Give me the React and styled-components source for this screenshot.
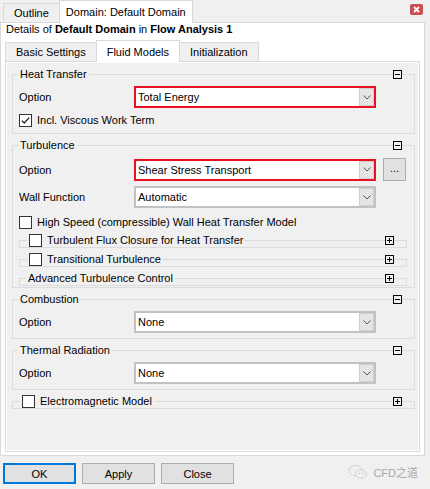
import React from 'react';
import styled, { createGlobalStyle } from 'styled-components';

const GlobalStyle = createGlobalStyle`
  html, body {
    margin: 0;
    padding: 0;
    background: #f0f0f0;
  }
  body {
    font-family: "Liberation Sans", Arial, "Noto Sans CJK SC", sans-serif;
    font-size: 11px;
    color: #000;
  }
`;

function Chevron() {
  return (
    <svg width="8" height="5" viewBox="0 0 8 5">
      <polyline points="0.5,0.5 4,4 7.5,0.5" fill="none" stroke="#555" strokeWidth="1" />
    </svg>
  );
}

function Check({ checked }) {
  return (
    <CheckBox>
      {checked && (
        <svg width="9" height="9" viewBox="0 0 9 9">
          <polyline points="0.8,4.6 3.2,7 8.2,1.6" fill="none" stroke="#222" strokeWidth="1.3" />
        </svg>
      )}
    </CheckBox>
  );
}

function Combo({ value, highlight }) {
  return (
    <Select $hl={highlight}>
      <SelectValue>{value}</SelectValue>
      <ArrowBox>
        <Chevron />
      </ArrowBox>
    </Select>
  );
}

function Group({ title, check, checked, inset, collapsed, children, bodyTop = 5, bodyBottom = 5, sub }) {
  return (
    <GroupWrap $sub={sub}>
      <Fieldset>
        <Legend $inset={inset}>
          <LegendInner>
            {check && <Check checked={checked} />}
            <span>{title}</span>
          </LegendInner>
        </Legend>
        {!collapsed && (
          <GroupBody $pt={bodyTop} $pb={bodyBottom}>
            {children}
          </GroupBody>
        )}
      </Fieldset>
      <Toggle $plus={collapsed} />
    </GroupWrap>
  );
}

function WeChatMark() {
  return (
    <svg width="20" height="16" viewBox="0 0 20 16">
      <ellipse cx="7.5" cy="6.5" rx="6.5" ry="5.2" fill="none" stroke="#c4c4c4" strokeWidth="1" strokeDasharray="2 1" />
      <ellipse cx="13" cy="10" rx="5.5" ry="4.3" fill="#f0f0f0" stroke="#c4c4c4" strokeWidth="1" strokeDasharray="2 1" />
      <circle cx="11" cy="9.5" r="0.8" fill="#c4c4c4" />
      <circle cx="15" cy="9.5" r="0.8" fill="#c4c4c4" />
    </svg>
  );
}

export default function App() {
  return (
    <>
      <GlobalStyle />
      <Window>
        <TopBar>
          <TopTab $pad={10}>Outline</TopTab>
          <TopTab $active $pad={6}>Domain: Default Domain</TopTab>
          <CloseBtn>
            <svg width="7" height="7" viewBox="0 0 7 7">
              <path d="M1 1 L6 6 M6 1 L1 6" stroke="#fff" strokeWidth="1.8" />
            </svg>
          </CloseBtn>
        </TopBar>

        <Main>
          <Details>
            Details of <b>Default Domain</b> in <b>Flow Analysis 1</b>
          </Details>

          <InnerTabs>
            <InnerTab>Basic Settings</InnerTab>
            <InnerTab $active>Fluid Models</InnerTab>
            <InnerTab>Initialization</InnerTab>
          </InnerTabs>

          <Panel>
            <Group title="Heat Transfer" bodyBottom={1}>
              <Row>
                <Label>Option</Label>
                <Combo value="Total Energy" highlight />
              </Row>
              <CheckRow>
                <Check checked />
                <span>Incl. Viscous Work Term</span>
              </CheckRow>
            </Group>

            <Group title="Turbulence" bodyTop={6} bodyBottom={1}>
              <Row>
                <Label>Option</Label>
                <Combo value="Shear Stress Transport" highlight />
                <DotsButton>...</DotsButton>
              </Row>
              <Row $mt={6}>
                <Label>Wall Function</Label>
                <Combo value="Automatic" />
              </Row>
              <CheckRow $mt={2}>
                <Check />
                <span>High Speed (compressible) Wall Heat Transfer Model</span>
              </CheckRow>
              <SubList>
                <Group sub collapsed check inset={7} title="Turbulent Flux Closure for Heat Transfer" />
                <Group sub collapsed check inset={7} title="Transitional Turbulence" />
                <Group sub collapsed inset={6} title="Advanced Turbulence Control" />
              </SubList>
            </Group>

            <Group title="Combustion">
              <Row>
                <Label>Option</Label>
                <Combo value="None" />
              </Row>
            </Group>

            <Group title="Thermal Radiation">
              <Row>
                <Label>Option</Label>
                <Combo value="None" />
              </Row>
            </Group>

            <Group collapsed check inset={7} title="Electromagnetic Model" />
          </Panel>
        </Main>

        <Footer>
          <Button $primary>OK</Button>
          <Button>Apply</Button>
          <Button>Close</Button>
          <Watermark>
            <WeChatMark />
            <span>CFD之道</span>
          </Watermark>
        </Footer>
      </Window>
    </>
  );
}

const Window = styled.div`
  width: 430px;
  height: 489px;
  display: flex;
  flex-direction: column;
  overflow: hidden;
  background: #f0f0f0;
`;

const TopBar = styled.div`
  height: 22px;
  display: flex;
  align-items: flex-end;
  padding: 0 7px 0 3px;
  position: relative;
  z-index: 1;
`;

const TopTab = styled.div`
  box-sizing: border-box;
  height: ${(p) => (p.$active ? 23 : 19)}px;
  margin-bottom: ${(p) => (p.$active ? -1 : 0)}px;
  padding: 0 ${(p) => p.$pad}px;
  display: flex;
  align-items: center;
  white-space: nowrap;
  background: ${(p) => (p.$active ? '#fff' : '#f0f0f0')};
  border: 1px solid #d9d9d9;
  border-bottom: none;
  & + & {
    margin-left: -1px;
  }
`;

const CloseBtn = styled.div`
  margin-left: auto;
  align-self: flex-start;
  margin-top: 4px;
  width: 13px;
  height: 11px;
  border-radius: 2px;
  background: #c75050;
  display: flex;
  align-items: center;
  justify-content: center;
`;

const Main = styled.div`
  box-sizing: border-box;
  width: 425px;
  height: 434px;
  background: #fff;
  border: 1px solid #d9d9d9;
  padding: 0 4px 3px 4px;
  display: flex;
  flex-direction: column;
`;

const Details = styled.div`
  line-height: 13px;
  padding-left: 1px;
  white-space: nowrap;
`;

const InnerTabs = styled.div`
  margin-top: 5px;
  height: 20px;
  display: flex;
  align-items: flex-end;
  position: relative;
  z-index: 1;
`;

const InnerTab = styled.div`
  box-sizing: border-box;
  height: ${(p) => (p.$active ? 22 : 19)}px;
  margin-bottom: ${(p) => (p.$active ? -1 : 0)}px;
  padding: 0 10px;
  display: flex;
  align-items: center;
  background: ${(p) => (p.$active ? '#fff' : '#f0f0f0')};
  border: 1px solid #d9d9d9;
  border-bottom: none;
  & + & {
    margin-left: -1px;
  }
`;

const Panel = styled.div`
  flex: 1;
  box-sizing: border-box;
  background: #f0f0f0;
  border: 1px solid #d9d9d9;
  box-shadow: inset 0 0 0 1px #fff;
  padding: 6px 4px 0 6px;
  display: flex;
  flex-direction: column;
  gap: 5px;
`;

const GroupWrap = styled.div`
  position: relative;
  margin-right: ${(p) => (p.$sub ? 1 : 0)}px;
`;

const Fieldset = styled.fieldset`
  margin: 0;
  padding: 0;
  min-width: 0;
  border: 1px solid #dcdcdc;
`;

const Legend = styled.legend`
  margin-left: ${(p) => p.$inset ?? 5}px;
  padding: 0 2px;
  height: 13px;
  line-height: 13px;
`;

const LegendInner = styled.span`
  display: flex;
  align-items: center;
  gap: 5px;
  white-space: nowrap;
`;

const Toggle = styled.span`
  position: absolute;
  top: 2px;
  right: 13px;
  width: 9px;
  height: 9px;
  box-sizing: border-box;
  border: 1px solid #000;
  background: #f0f0f0;
  &::before {
    content: '';
    position: absolute;
    left: 1px;
    top: 3px;
    width: 5px;
    height: 1px;
    background: #000;
  }
  &::after {
    content: '';
    display: ${(p) => (p.$plus ? 'block' : 'none')};
    position: absolute;
    left: 3px;
    top: 1px;
    width: 1px;
    height: 5px;
    background: #000;
  }
`;

const GroupBody = styled.div`
  display: flex;
  flex-direction: column;
  padding: ${(p) => p.$pt}px 6px ${(p) => p.$pb}px;
`;

const Row = styled.div`
  display: grid;
  grid-template-columns: 108px 242px auto;
  column-gap: 7px;
  align-items: center;
  height: 22px;
  margin-top: ${(p) => p.$mt || 0}px;
`;

const Label = styled.span`
  white-space: nowrap;
`;

const Select = styled.div`
  box-sizing: border-box;
  height: 22px;
  display: flex;
  align-items: stretch;
  background: #fff;
  border: 2px solid ${(p) => (p.$hl ? '#e81123' : '#c2c2c2')};
`;

const SelectValue = styled.span`
  flex: 1;
  display: flex;
  align-items: center;
  padding-left: 2px;
  white-space: nowrap;
  overflow: hidden;
`;

const ArrowBox = styled.span`
  width: 15px;
  box-sizing: border-box;
  display: flex;
  align-items: center;
  justify-content: center;
  background: #e5e5e5;
  border: 1px solid #cfcfcf;
`;

const DotsButton = styled.div`
  box-sizing: border-box;
  width: 23px;
  height: 23px;
  display: flex;
  align-items: center;
  justify-content: center;
  padding-bottom: 3px;
  background: #e1e1e1;
  border: 1px solid #adadad;
`;

const CheckRow = styled.label`
  display: flex;
  align-items: center;
  gap: 5px;
  height: 24px;
  margin-top: ${(p) => p.$mt || 0}px;
  white-space: nowrap;
`;

const CheckBox = styled.span`
  box-sizing: border-box;
  width: 13px;
  height: 13px;
  flex-shrink: 0;
  display: inline-flex;
  align-items: center;
  justify-content: center;
  background: #fff;
  border: 1px solid #333;
`;

const SubList = styled.div`
  display: flex;
  flex-direction: column;
  gap: 5px;
`;

const Footer = styled.div`
  flex: 1;
  display: flex;
  align-items: flex-start;
  gap: 6px;
  padding: 7px 12px 0 3px;
`;

const Button = styled.button`
  box-sizing: border-box;
  width: 73px;
  height: 21px;
  padding: 0;
  font: inherit;
  color: #000;
  background: #e1e1e1;
  border: ${(p) => (p.$primary ? '2px solid #0078d7' : '1px solid #adadad')};
`;

const Watermark = styled.div`
  margin-left: auto;
  margin-top: 1px;
  display: flex;
  align-items: center;
  gap: 5px;
  color: #a8a8a8;
  font-size: 11px;
`;
